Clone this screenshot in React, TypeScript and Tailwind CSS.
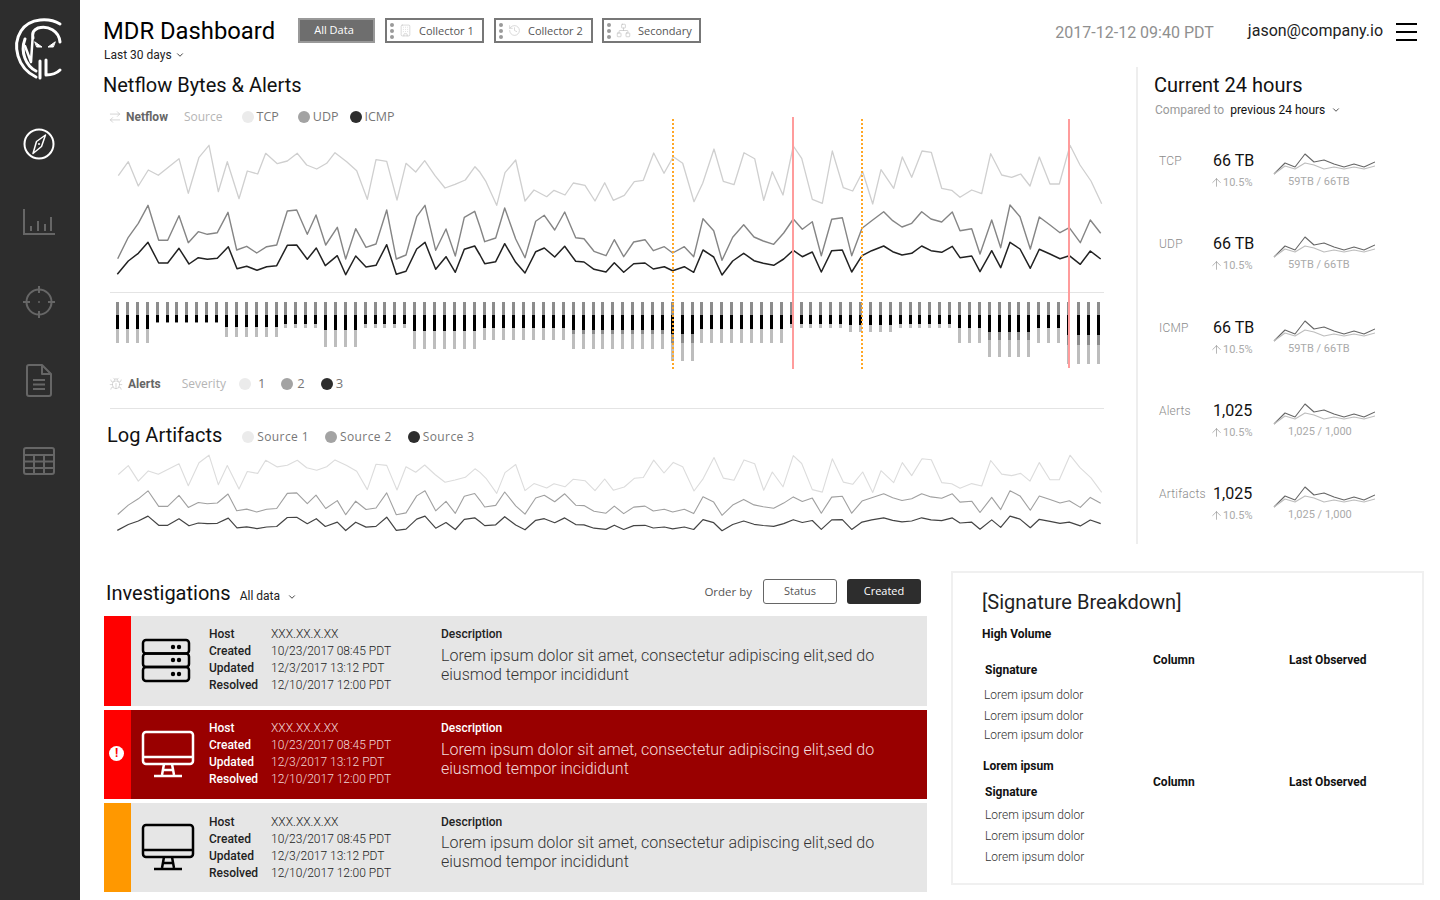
import React from 'react';
import { ArrowRightLeft, Building, Bug, ChevronDown, History, Network, ArrowUp } from 'lucide-react';

// chart points traced from the design, [x, y] pairs per horizontal band
const pts = (offset: number, flat: number[]) => {
  const out: [number, number][] = [];
  for (let i = 0; i < flat.length; i += 2) out.push([offset + flat[i] / 3, flat[i + 1] / 3]);
  return out;
};

const tcp = [
  ...pts(0, [355,527,385,485,415,558,445,510,475,526,537,476,565,580,597,472,627,436,655,575,682,485,717,596,742,513,773,522,797,460,832,491,862,483,892,460,920,495,950,507,980,490,1005,458,1040,485,1070,512,1102,598,1128,479,1160,484,1191,600,1218,490,1247,516,1274,482,1305,527,1335,564,1365,553,1396,540,1425,500]),
  ...pts(480, [0,517,18,545,50,616,75,518,107,480,135,603,162,570,200,590,222,571,255,585,280,549,315,556,345,603,374,548,400,601,433,586,463,545,490,541,521,459,552,520,580,470,608,490,642,605,668,550,702,447,730,544,762,554,792,458,824,476,851,601,877,515,909,585,940,438,965,475,997,598,1027,610,1057,453,1090,563,1118,573,1148,515,1178,612,1203,509,1241,565,1267,471,1295,532,1326,453,1354,457,1385,565,1415,571]),
  ...pts(960, [0,592,35,570,65,581,92,461,125,525,155,532,182,522,210,558,238,471,270,552,298,552,330,436,360,495,393,543,425,611]),
];
const udp = [
  ...pts(0, [353,776,385,712,415,670,444,616,476,721,503,721,537,647,565,728,595,695,622,703,652,698,684,637,710,750,740,739,770,759,800,740,830,735,862,633,890,630,922,703,948,645,977,735,1012,682,1037,777,1067,686,1098,742,1128,732,1160,630,1189,777,1218,765,1250,650,1275,616,1307,751,1338,687,1366,768,1393,652,1424,634]),
  ...pts(480, [0,680,14,725,47,714,74,624,107,717,135,773,167,664,193,646,224,690,254,636,287,713,312,716,342,754,378,767,403,719,431,770,461,726,495,719,520,752,553,740,578,759,613,740,641,770,669,656,701,692,726,781,758,712,791,674,822,711,850,723,881,733,911,699,940,657,967,688,997,665,1024,767,1055,658,1087,653,1115,767,1146,685,1175,662,1211,635,1238,662,1266,681,1295,670,1325,635,1353,657,1385,666,1417,636]),
  ...pts(960, [0,692,35,686,60,762,95,660,122,743,150,615,180,650,211,747,238,651,270,675,300,698,328,683,361,728,391,660,422,700]),
];
const icmp = [
  ...pts(0, [352,823,385,783,415,760,444,727,476,789,503,789,537,745,567,792,595,773,622,778,652,775,685,740,711,806,740,799,771,811,800,800,830,797,862,736,890,735,922,778,949,744,976,797,1012,767,1037,824,1067,768,1098,801,1128,796,1160,734,1189,823,1218,814,1250,747,1275,727,1307,808,1338,770,1366,817,1393,748,1424,738]),
  ...pts(480, [0,765,14,791,47,785,74,731,107,787,135,819,167,755,193,744,224,771,254,739,287,784,312,786,342,808,378,816,403,788,431,817,461,791,495,789,520,807,553,800,578,812,613,800,641,817,669,750,701,771,726,825,758,783,791,760,822,782,850,790,881,796,911,777,940,751,967,770,997,756,1024,816,1055,752,1087,750,1115,816,1146,767,1175,752,1211,738,1238,755,1266,765,1295,760,1325,738,1353,752,1385,757,1417,739]),
  ...pts(960, [0,773,35,768,60,815,95,752,122,803,150,727,180,747,211,805,238,748,270,762,300,776,328,767,361,793,391,753,422,777]),
];

const line = (p: [number, number][], fy: (y: number) => number = (y) => y) =>
  p.map(([x, y]) => `${x.toFixed(1)},${fy(y).toFixed(1)}`).join(' ');

// [count, black end, mid grey end, light end] in px below the top of the bars
const barRuns: [number, number, number, number][] = [
  [4, 27, 27, 41],
  [7, 20, 20, 20],
  [6, 25, 25, 35],
  [4, 22, 22, 26],
  [4, 28, 28, 45],
  [5, 22, 22, 26],
  [7, 29, 29, 47],
  [9, 26, 26, 38],
  [10, 28, 32, 47],
  [3, 32, 41, 59],
  [9, 27, 27, 41],
  [6, 22, 22, 26],
  [5, 23, 23, 30],
  [6, 22, 22, 26],
  [3, 26, 26, 41],
  [5, 30, 38, 55],
  [3, 26, 26, 41],
  [4, 33, 43, 62],
];
const bars = barRuns.flatMap(([n, b, m, l]) => Array.from({ length: n }, () => ({ b, m, l })));

const stats = [
  { label: 'TCP', value: '66 TB', sub: '59TB / 66TB' },
  { label: 'UDP', value: '66 TB', sub: '59TB / 66TB' },
  { label: 'ICMP', value: '66 TB', sub: '59TB / 66TB' },
  { label: 'Alerts', value: '1,025', sub: '1,025 / 1,000' },
  { label: 'Artifacts', value: '1,025', sub: '1,025 / 1,000' },
];

const Dots = () => (
  <div className="flex flex-col gap-[2px] ml-[3px]">
    <span className="w-[4px] h-[4px] rounded-full bg-[#9a9a9a]" />
    <span className="w-[4px] h-[4px] rounded-full bg-[#9a9a9a]" />
    <span className="w-[4px] h-[4px] rounded-full bg-[#9a9a9a]" />
  </div>
);

const Swatch = ({ color }: { color: string }) => <span className={`w-3 h-3 rounded-full ${color}`} />;

const Logo = () => (
  <svg width="80" height="80" viewBox="0 10 80 80" fill="none" stroke="white" strokeWidth="3" strokeLinecap="round" strokeLinejoin="round">
    <path d="M60 24C50 18 30 17 21 31C12 45 17 68 36 77" />
    <path d="M60 42C59 31 48 25 38 28C33 30 32 33 33 38" />
    <path d="M25 39C20 52 26 66 36 71" />
    <path d="M25 46L31 62L33 32" strokeWidth="2.5" />
    <path d="M40 61V78" />
    <path d="M46 60V75C52 75 57 73 60 70" />
    <path d="M35 42L42 47L37 47Z" fill="white" strokeWidth="1" />
    <path d="M55 42L48 47L53 47Z" fill="white" strokeWidth="1" />
  </svg>
);

const Sidebar = () => (
  <div className="w-20 shrink-0 h-[900px] bg-[#2d2d2d] flex flex-col items-center">
    <div className="h-20 mt-[10px] -ml-[1px]">
      <Logo />
    </div>
    <svg className="mt-[37px] -ml-[2px]" width="34" height="34" viewBox="0 0 34 34" fill="none" stroke="white">
      <circle cx="17" cy="17" r="14.5" strokeWidth="2" />
      <path d="M23.5 8L19.5 19.5L11 26.500L14.500 14.500Z" strokeWidth="1.5" strokeLinejoin="round" />
      <circle cx="17" cy="17" r="1" fill="white" stroke="none" />
    </svg>
    <svg className="mt-[47px] -ml-[2px]" width="34" height="28" viewBox="0 0 34 28" fill="none" stroke="#666" strokeWidth="2">
      <path d="M2 1V26H33" />
      <path d="M9 18V23M16 13V23M23 16V23M29 9V23" />
    </svg>
    <svg className="mt-[49px] -ml-[2px]" width="34" height="34" viewBox="0 0 34 34" fill="none" stroke="#666" strokeWidth="2">
      <circle cx="17" cy="17" r="12.500" />
      <path d="M17 1V8M17 26V33M1 17H8M26 17H33" />
      <circle cx="17" cy="17" r="1" fill="#666" stroke="none" />
    </svg>
    <svg className="mt-[45px] -ml-[2px]" width="26" height="33" viewBox="0 0 26 33" fill="none" stroke="#666" strokeWidth="2" strokeLinejoin="round">
      <path d="M3 1H16L25 10V30Q25 32 23 32H3Q1 32 1 30V3Q1 1 3 1Z" />
      <path d="M16 1V10H25" />
      <path d="M7 16H19M7 20.500H19M7 25H19" />
    </svg>
    <svg className="mt-[49px] -ml-[2px]" width="34" height="30" viewBox="0 0 34 30" fill="none" stroke="#666" strokeWidth="2">
      <rect x="2" y="2" width="30" height="26" rx="2" />
      <path d="M2 9H32M2 15.500H32M2 22H32M12 9V28M22 9V28" />
    </svg>
  </div>
);

const CollectorButton = ({ icon, label, width }: { icon: React.ReactNode; label: string; width: string }) => (
  <div className={`h-[25px] ${width} border-2 border-[#777] flex items-center text-[11px] text-[#555] font-[family-name:'Open_Sans',sans-serif]`}>
    <Dots />
    <span className="ml-[5px] text-[#bbbbbb]">{icon}</span>
    <span className="ml-[7px] pt-[1px] whitespace-nowrap">{label}</span>
  </div>
);

const Header = () => (
  <div className="h-[67px] flex items-start pl-[23px] pt-[18px]">
    <div className="w-[195px]">
      <h1 className="text-[23.800px] leading-[27px] text-black whitespace-nowrap">MDR Dashboard</h1>
      <div className="flex items-center gap-[3px] mt-[3px] ml-[1px] text-[12px] leading-[14px] text-[#222]">
        Last 30 days <ChevronDown size={10} strokeWidth={2} />
      </div>
    </div>
    <div className="flex gap-[10px]">
      <div className="h-[25px] w-[77px] border-2 border-[#999] bg-[#6e6e6e] text-white text-[11px] pr-[5px] flex items-center justify-center font-[family-name:'Open_Sans',sans-serif]">
        All Data
      </div>
      <CollectorButton icon={<Building size={13} strokeWidth={1} />} label="Collector 1" width="w-[99px]" />
      <CollectorButton icon={<History size={13} strokeWidth={1} />} label="Collector 2" width="w-[99px]" />
      <CollectorButton icon={<Network size={15} strokeWidth={1} />} label="Secondary" width="w-[99px] -ml-[1px]" />
    </div>
    <div className="ml-auto text-[16px] leading-[29px] text-[#8f8f8f] whitespace-nowrap">2017-12-12 09:40 PDT</div>
    <div className="ml-[34px] text-[16px] leading-[26px] text-[#222] whitespace-nowrap">jason@company.io</div>
    <div className="ml-[13px] mr-[23px] mt-[5px] w-[21px] flex flex-col gap-[6px]">
      <span className="h-[2px] bg-black" />
      <span className="h-[2px] bg-black" />
      <span className="h-[2px] bg-black" />
    </div>
  </div>
);

const NetflowChart = () => (
  <svg className="block" width="1000" height="155" viewBox="110 135 1000 155" fill="none" strokeLinejoin="round">
    <polyline points={line(tcp)} stroke="#cfcfcf" strokeWidth="1.3" />
    <polyline points={line(udp)} stroke="#858585" strokeWidth="1.4" />
    <polyline points={line(icmp)} stroke="#222" strokeWidth="1.5" />
  </svg>
);

const LogChart = () => (
  <svg className="block" width="1000" height="85" viewBox="110 450 1000 85" fill="none" strokeLinejoin="round">
    <polyline points={line(tcp, (y) => 455 + (y - 145) * 0.636)} stroke="#dcdcdc" strokeWidth="1.1" />
    <polyline points={line(udp, (y) => 490.700 + (y - 205) * 0.444)} stroke="#a0a0a0" strokeWidth="1.1" />
    <polyline points={line(icmp, (y) => 516 + (y - 242) * 0.445)} stroke="#444" strokeWidth="1.2" />
  </svg>
);

const AlertBars = () => (
  <div className="h-[64px] w-[985px] ml-[36px] flex justify-between items-start">
    {bars.map((bar, i) => (
      <div key={i} className="relative w-[3px] bg-[#8c8c8c]" style={{ height: bar.m + 1 }}>
        <div className="absolute left-0 w-[3px] top-[13px] bg-black" style={{ height: bar.b - 13 }} />
        <div className="absolute left-0 w-[3px] bg-[#bdbdbd]" style={{ top: bar.m, height: Math.max(bar.l - bar.m, 0) }} />
      </div>
    ))}
  </div>
);

const Netflow = () => (
  <div className="relative w-[1058px] h-[477px] border-r-2 border-[#eeeeee] shrink-0">
    <div className="pl-[23px]">
      <h2 className="text-[20px] leading-[36px] text-[#111] whitespace-nowrap">Netflow Bytes &amp; Alerts</h2>
    </div>

    <div className="flex items-center h-[20px] mt-[4px] pl-[29px] text-[12px] whitespace-nowrap">
      <ArrowRightLeft size={14} strokeWidth={1.2} className="text-[#c4c4c4] -ml-[1px]" />
      <span className="ml-[4px] font-bold text-[#666]">Netflow</span>
      <span className="ml-[16px] text-[#b5b5b5] font-[family-name:'Open_Sans',sans-serif]">Source</span>
      <div className="flex items-center ml-[19px] text-[#777] text-[12.500px] font-[family-name:'Open_Sans',sans-serif]">
        <Swatch color="bg-[#ebebeb]" /><span className="ml-[3px]">TCP</span>
        <span className="ml-[19px]"><Swatch color="block bg-[#a3a3a3]" /></span><span className="ml-[3px]">UDP</span>
        <span className="ml-[11px]"><Swatch color="block bg-[#2d2d2d]" /></span><span className="ml-[3px]">ICMP</span>
      </div>
    </div>

    <div className="mt-[8px] ml-[30px]">
      <NetflowChart />
    </div>
    <div className="ml-[30px] w-[994px] border-t border-[#e4e4e4] mt-[2px]" />
    <div className="mt-[9px]">
      <AlertBars />
    </div>

    <div className="flex items-center h-[20px] mt-[8px] pl-[29px] text-[12px] whitespace-nowrap">
      <Bug size={14} strokeWidth={1} className="text-[#bdbdbd]" />
      <span className="ml-[5px] font-bold text-[#666]">Alerts</span>
      <span className="ml-[21px] text-[#b5b5b5] font-[family-name:'Open_Sans',sans-serif]">Severity</span>
      <div className="flex items-center ml-[13px] text-[#777] text-[13px] font-[family-name:'Open_Sans',sans-serif]">
        <Swatch color="bg-[#ebebeb]" /><span className="ml-[7px]">1</span>
        <span className="ml-[16px]"><Swatch color="block bg-[#a3a3a3]" /></span><span className="ml-[4px]">2</span>
        <span className="ml-[16px]"><Swatch color="block bg-[#2d2d2d]" /></span><span className="ml-[3px]">3</span>
      </div>
    </div>

    <div className="ml-[30px] w-[994px] border-t border-[#e4e4e4] mt-[14px]" />

    <div className="flex items-center h-[36px] mt-[8px] pl-[27px] whitespace-nowrap">
      <h2 className="text-[20px] text-[#111]">Log Artifacts</h2>
      <div className="flex items-center ml-[20px] mt-[4px] text-[#777] text-[12px] tracking-[0.4px] font-[family-name:'Open_Sans',sans-serif]">
        <Swatch color="bg-[#ebebeb]" /><span className="ml-[3px]">Source 1</span>
        <span className="ml-[16px]"><Swatch color="block bg-[#a3a3a3]" /></span><span className="ml-[3px]">Source 2</span>
        <span className="ml-[16px]"><Swatch color="block bg-[#2d2d2d]" /></span><span className="ml-[3px]">Source 3</span>
      </div>
    </div>
    <div className="ml-[30px] -mt-[3px]">
      <LogChart />
    </div>

    {/* alert markers sit over the charts */}
    <span className="absolute left-[592px] top-[52px] h-[250px] border-l-2 border-dotted border-[#ffa726]" />
    <span className="absolute left-[781px] top-[52px] h-[250px] border-l-2 border-dotted border-[#ffa726]" />
    <span className="absolute left-[712px] top-[50px] h-[252px] w-[2px] bg-[#ff9c9c]" />
    <span className="absolute left-[988px] top-[52px] h-[249px] w-[2px] bg-[#ff9c9c]" />
  </div>
);

const Spark = () => (
  <svg className="block" width="102" height="22" viewBox="-1 -1 102 22" fill="none" strokeLinejoin="round">
    <polyline points="0,20 11,9 21,13 31,0 40,8 50,6 60,10 70,13 80,10 90,13 101,8" stroke="#666" strokeWidth="1.1" />
    <polyline points="0,20 11,12 21,15 31,9 40,11 50,15 60,13 70,15 80,13 90,15 101,12" stroke="#bdbdbd" strokeWidth="1.1" />
  </svg>
);

const Current = () => (
  <div className="pl-[16px] flex-1 h-[477px] overflow-hidden">
    <h2 className="text-[20px] leading-[36px] text-[#111] whitespace-nowrap">Current 24 hours</h2>
    <div className="flex items-center h-[16px] -mt-[1px] ml-[1px] text-[12px] whitespace-nowrap">
      <span className="text-[#999]">Compared to</span>
      <span className="ml-[6px] text-[#111]">previous 24 hours</span>
      <ChevronDown size={10} strokeWidth={2} className="ml-[6px] text-[#333]" />
    </div>
    <div className="mt-[33px]">
      {stats.map((s) => (
        <div key={s.label} className="h-[83.300px] flex items-start">
          <div className="w-[54px] ml-[5px] text-[12px] leading-[20px] text-[#8c8c8c] font-light tracking-[0.2px]">{s.label}</div>
          <div className="w-[60px]">
            <div className="text-[16px] leading-[20px] text-[#111]">{s.value}</div>
            <div className="flex items-center mt-[5px] -ml-[3px] text-[11px] leading-[13px] text-[#aaa]">
              <ArrowUp size={13} strokeWidth={1} className="text-[#777]" />
              <span>10.5%</span>
            </div>
          </div>
          <div className="pt-[2px]">
            <Spark />
            <div className="ml-[15px] text-[11px] leading-[13px] text-[#aaa] whitespace-nowrap">{s.sub}</div>
          </div>
        </div>
      ))}
    </div>
  </div>
);

const ServerIcon = () => (
  <svg width="50" height="46" viewBox="0 0 50 46" fill="none" stroke="black" strokeWidth="2.500">
    <rect x="2" y="2" width="46" height="13.500" rx="3" />
    <rect x="2" y="15.500" width="46" height="13.500" rx="3" />
    <rect x="2" y="29" width="46" height="14" rx="3" />
    <g fill="black" stroke="none">
      <circle cx="32" cy="9" r="2.200" /><circle cx="38" cy="9" r="2.200" />
      <circle cx="32" cy="22" r="2.200" /><circle cx="38" cy="22" r="2.200" />
      <circle cx="32" cy="36" r="2.200" /><circle cx="38" cy="36" r="2.200" />
    </g>
  </svg>
);

const MonitorIcon = ({ color }: { color: string }) => (
  <svg width="54" height="50" viewBox="0 0 54 50" fill="none" stroke={color} strokeWidth="2.500" strokeLinejoin="round">
    <rect x="2" y="2" width="50" height="32" rx="3" />
    <path d="M2 27H52" />
    <path d="M23 34L21 45M31 34L33 45M22 40H32" />
    <path d="M13 46H41" strokeWidth="2.500" />
  </svg>
);

const rows = [
  { strip: 'bg-[#ff0000]', body: 'bg-[#e6e6e6]', dark: false, icon: <ServerIcon />, alert: false, h: 'h-[90px]', pt: 'pt-[10px]', descMt: 'mt-[3px]' },
  { strip: 'bg-[#ff0000]', body: 'bg-[#990000]', dark: true, icon: <MonitorIcon color="white" />, alert: true, h: 'h-[89px]', pt: 'pt-[10px]', descMt: 'mt-[3px]' },
  { strip: 'bg-[#ff9800]', body: 'bg-[#e6e6e6]', dark: false, icon: <MonitorIcon color="black" />, alert: false, h: 'h-[89px]', pt: 'pt-[11px]', descMt: 'mt-[2px]' },
];

const details = [
  ['Host', 'XXX.XX.X.XX'],
  ['Created', '10/23/2017 08:45 PDT'],
  ['Updated', '12/3/2017 13:12 PDT'],
  ['Resolved', '12/10/2017 12:00 PDT'],
];

const Investigations = () => (
  <div className="w-[823px] ml-[24px] shrink-0">
    <div className="h-[45px] flex items-center whitespace-nowrap pr-[6px]">
      <h2 className="ml-[2px] text-[20px] text-[#111] -mt-[1px]">Investigations</h2>
      <span className="ml-[9px] mt-[5px] text-[12px] text-[#222]">All data</span>
      <ChevronDown size={10} strokeWidth={2} className="ml-[7px] mt-[6px] text-[#222]" />
      <span className="ml-auto -mt-[4px] text-[11.500px] text-[#555] font-[family-name:'Open_Sans',sans-serif]">Order by</span>
      <span className="ml-[11px] -mt-[4px] w-[74px] h-[25px] rounded-[3px] border border-[#666] flex items-center justify-center text-[11px] text-[#555] font-[family-name:'Open_Sans',sans-serif]">Status</span>
      <span className="ml-[10px] -mt-[4px] w-[74px] h-[25px] rounded-[3px] bg-[#2d2d2d] flex items-center justify-center text-[11px] text-white font-[family-name:'Open_Sans',sans-serif]">Created</span>
    </div>
    <div className="flex flex-col gap-[4px]">
      {rows.map((row, i) => (
        <div key={i} className={`flex ${row.h} ${row.body}`}>
          <div className={`w-[27px] shrink-0 ${row.strip} flex items-center justify-center`}>
            {row.alert && (
              <span className="w-[15px] h-[15px] -ml-[2px] -mt-[2px] rounded-full bg-white text-[#ff0000] text-[12px] font-bold leading-[15px] text-center">!</span>
            )}
          </div>
          <div className="w-[78px] shrink-0 pl-[10px] flex items-center">{row.icon}</div>
          <div className={`w-[232px] shrink-0 ${row.pt} text-[12px] leading-[17px] ${row.dark ? 'text-white' : 'text-[#222]'}`}>
            {details.map(([k, v]) => (
              <div key={k} className="flex whitespace-nowrap">
                <span className="w-[62px] font-medium">{k}</span>
                <span className={`font-light ${row.dark ? 'text-[#f0d8d8]' : ''}`}>{v}</span>
              </div>
            ))}
          </div>
          <div className={`${row.pt} ${row.dark ? 'text-white' : 'text-[#222]'}`}>
            <div className="text-[12px] leading-[17px] font-medium">Description</div>
            <p className={`${row.descMt} text-[16px] leading-[19px] font-light w-[460px] ${row.dark ? 'text-[#f3dcdc]' : 'text-[#333]'}`}>
              Lorem ipsum dolor sit amet, consectetur adipiscing elit,sed do eiusmod tempor incididunt
            </p>
          </div>
        </div>
      ))}
    </div>
  </div>
);

const Lorem = ({ className }: { className: string }) => (
  <div className={`text-[12px] leading-[14px] font-light text-[#333] ${className}`}>Lorem ipsum dolor</div>
);

const SignatureCard = () => (
  <div className="w-[473px] h-[314px] ml-[24px] border-2 border-[#f0f0f0] pl-[29px] pt-[17px]">
    <h2 className="text-[20px] leading-[25px] text-[#222] whitespace-nowrap">[Signature Breakdown]</h2>
    <div className="mt-[12px] text-[12px] leading-[14px] font-bold text-[#111]">High Volume</div>
    <div className="grid grid-cols-[171px_136px_1fr] text-[12px] leading-[14px] font-bold text-[#111] whitespace-nowrap">
      <div className="mt-[22px] ml-[3px]">Signature</div>
      <div className="mt-[12px]">Column</div>
      <div className="mt-[12px]">Last Observed</div>
    </div>
    <Lorem className="mt-[11px] ml-[2px]" />
    <Lorem className="mt-[7px] ml-[2px]" />
    <Lorem className="mt-[5px] ml-[2px]" />
    <div className="mt-[17px] ml-[1px] text-[12px] leading-[14px] font-bold text-[#111]">Lorem ipsum</div>
    <div className="grid grid-cols-[171px_136px_1fr] text-[12px] leading-[14px] font-bold text-[#111] whitespace-nowrap">
      <div className="mt-[12px] ml-[3px]">Signature</div>
      <div className="mt-[2px]">Column</div>
      <div className="mt-[2px]">Last Observed</div>
    </div>
    <Lorem className="mt-[9px] ml-[3px]" />
    <Lorem className="mt-[7px] ml-[3px]" />
    <Lorem className="mt-[7px] ml-[3px]" />
  </div>
);

export default function App() {
  return (
    <div className="flex w-[1440px] h-[900px] overflow-hidden bg-white font-[family-name:Roboto,sans-serif]">
      <Sidebar />
      <div className="flex-1 min-w-0">
        <Header />
        <div className="flex">
          <Netflow />
          <Current />
        </div>
        <div className="flex mt-[27px]">
          <Investigations />
          <SignatureCard />
        </div>
      </div>
    </div>
  );
}
